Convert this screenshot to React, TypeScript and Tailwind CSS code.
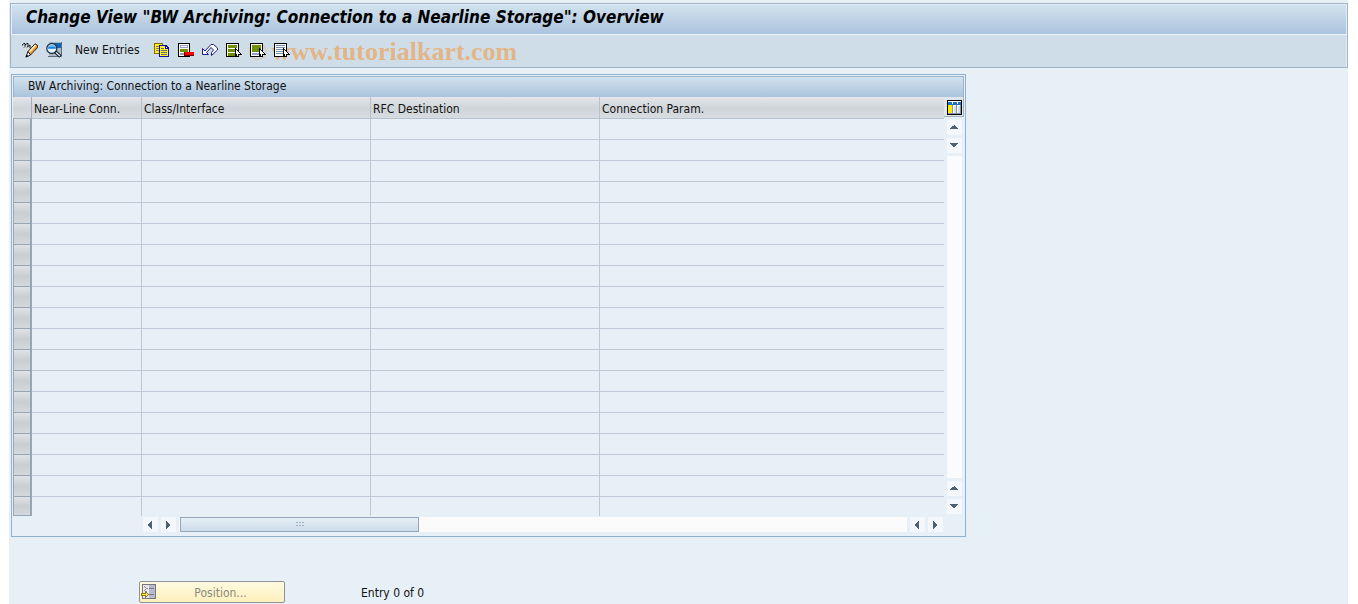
import type { ReactNode } from 'react'

const COLUMNS = [
  { label: 'Near-Line Conn.', width: 'w-[110px]' },
  { label: 'Class/Interface', width: 'w-[229px]' },
  { label: 'RFC Destination', width: 'w-[229px]' },
  { label: 'Connection Param.', width: '' },
]

const ROWS = Array.from({ length: 19 }, (_, i) => i)

function Icon({ children, size = 16 }: { children: ReactNode; size?: number }) {
  return (
    <svg width={size} height={size} viewBox={`0 0 ${size} ${size}`} shapeRendering="crispEdges" aria-hidden="true">
      {children}
    </svg>
  )
}

function ChangeIcon() {
  return (
    <svg width="16" height="16" viewBox="0 0 16 16" fill="none" aria-hidden="true">
      <path d="M.5 3.500V2.500L2 1.500h1v3L2 5.500M3 3l2-1.500h1V4l-1 1.500M6 4.500l2-1.500v3l1 1" stroke="#1a1a1a" />
      <path d="M6 9.500L13 1.800l2.600 1.700v2L8.500 13z" fill="#f7a93c" stroke="#1a1a1a" />
      <path d="M7.200 10L13.500 3" stroke="#fff3c8" strokeWidth="1.300" />
      <path d="M8.600 12L15 5" stroke="#d9761c" strokeWidth="1" />
      <path d="M6 9.500L8.500 13l-4.500 2z" fill="#fff" stroke="#1a1a1a" />
      <path d="M3.500 15.500l1-3 2 1.700z" fill="#000" />
    </svg>
  )
}

function DisplayIcon() {
  return (
    <svg width="16" height="16" viewBox="0 0 16 16" fill="none" aria-hidden="true">
      <path d="M3 0h12v14H3z" fill="#a9bac9" />
      <path d="M4 1h11v5H4z" fill="#1264b4" />
      <path d="M15.500 0v14.500H2" stroke="#5c6c7c" />
      <circle cx="5.800" cy="6.500" r="5" fill="#e4f5ff" stroke="#24384c" strokeWidth="1.300" />
      <path d="M2 4.500Q5.800 1.500 9.800 4.500V7H2z" fill="#5cb2f4" />
      <path d="M2.500 5h7v1.500h-7z" fill="#2484d8" />
      <path d="M9.500 10l5 4.500" stroke="#101820" strokeWidth="3.400" />
      <path d="M10 10.500l4 3.500" stroke="#e8f2fa" strokeWidth="1.300" />
    </svg>
  )
}

function CopyIcon() {
  return (
    <Icon>
      <path d="M0 1h9v11H0z" fill="#807000" />
      <path d="M1 2h7v9H1z" fill="#ffef20" />
      <path d="M2 4h5v1H2zM2 6h5v1H2zM2 8h5v1H2z" fill="#8a8130" />
      <path d="M5 3h7l3 3v9H5z" fill="#1010b0" />
      <path d="M6 4h5v3h3v7H6z" fill="#ffef20" />
      <path d="M12 5h1v1h-1z" fill="#fff" />
      <path d="M7 6h3v1H7zM7 8h6v1H7zM7 10h6v1H7zM7 12h6v1H7z" fill="#6c6c80" />
    </Icon>
  )
}

function DeleteIcon() {
  return (
    <Icon>
      <path d="M0 1h12v14H0z" fill="#000" />
      <path d="M1 2h10v12H1z" fill="#fff" />
      <path d="M2 3h8v3H2z" fill="#9a9ac8" />
      <path d="M3 4h6v1H3z" fill="#fff" />
      <path d="M2 7h8v3H2z" fill="#6f9000" />
      <path d="M2 11h6v2H2z" fill="#9a9ac8" />
      <path d="M6 10h10v4H6z" fill="#600" />
      <path d="M7 10h9v3H7z" fill="#f00" />
    </Icon>
  )
}

function UndoIcon() {
  return (
    <svg width="16" height="16" viewBox="0 0 16 16" aria-hidden="true">
      <path
        d="M.5 6.500V12.500H6.500L4.500 10.500L9 5.500L11.500 8L9.500 10.500V13.500L15.500 8V6L11.500 2.500H9L3 9z"
        fill="#fff"
        stroke="#1c1c88"
      />
    </svg>
  )
}

function SelectIcon({ kind }: { kind: 'all' | 'block' | 'none' }) {
  return (
    <Icon>
      <path d="M0 1h13v14H0z" fill="#000" />
      <path d="M1 2h11v12H1z" fill="#fff" />
      {kind === 'all' && <path d="M2 3h9v3H2zM2 7h9v3H2zM2 11h9v3H2z" fill="#6f9000" />}
      {kind === 'block' && (
        <>
          <path d="M2 3h9v7H2z" fill="#6f9000" />
          <path d="M2 11h9v2H2z" fill="#9a9ac8" />
        </>
      )}
      {kind === 'none' && <path d="M2 3h9v1H2zM2 5h9v1H2zM2 7h9v1H2zM2 9h9v1H2zM2 11h9v1H2z" fill="#7890a8" />}
      <path d="M9 6h1v1h1v1h1v1h1v1h1v1h1v1h1v1h-3v2h-2v-1h-1v1H9z" fill="#000" />
      <path d="M10 8h1v1h1v1h1v1h1v1h-2v2h-1v-2h-1z" fill="#fff" />
    </Icon>
  )
}

function LayoutIcon() {
  return (
    <Icon size={15}>
      <path d="M0 0h15v15H0z" fill="#000" />
      <path d="M1 1h13v13H1z" fill="#fff" />
      <path d="M1 2h13v3H1z" fill="#1c70c0" />
      <path d="M5 1h1v3H5zM10 1h1v3h-1z" fill="#fff" />
      <path d="M1 5h4v8H1z" fill="#ffe800" />
      <path d="M5 5h1v9H5zM9 5h1v9H9zM13 5h1v9h-1z" fill="#8898a8" />
      <path d="M7 6h2v7H7zM11 6h2v7h-2z" fill="#d5dce2" />
      <path d="M1 13h13v1H1z" fill="#8898a8" />
    </Icon>
  )
}

function PositionIcon() {
  return (
    <Icon>
      <path d="M1 0h14v15H1z" fill="#77777c" />
      <path d="M2 1h12v13H2z" fill="#e8e8e8" />
      <path d="M8 1h6v13H8z" fill="#b9b9d4" />
      <path d="M8 4h5v1H8zM8 10h5v1H8z" fill="#77777c" />
      <path d="M3 2h1v1H3zM4 3h1v1H4zM5 4h2v1H5zM4 5h1v1H4zM3 6h1v1H3zM4 7h2v1H4z" fill="#8a8a90" />
      <path d="M0 9h4V7h1v1h1v1h1v1h1v1H7v1H6v1H5v1H4v-2H0z" fill="#8a7a20" />
      <path d="M1 10h4V9h1v1h1v1H6v1H5v-1H1z" fill="#ffe850" />
    </Icon>
  )
}

const ARROWS = {
  up: 'M7 5h1v1h1v1h1v1h1v1H3V8h1V7h1V6h2z',
  down: 'M3 5h8v1h-1v1H9v1H8v1H6V8H5V7H4V6H3z',
  left: 'M5 7h1V6h1V5h1V4h1v8H8v-1H7v-1H6V9H5z',
  right: 'M5 4h1v1h1v1h1v1h1v2H8v1H7v1H6v1H5z',
}

function ScrollButton({ dir }: { dir: keyof typeof ARROWS }) {
  return (
    <button type="button" aria-label={`Scroll ${dir}`} className="size-[15px] shrink-0 bg-[#f4f7fb]">
      <Icon size={15}>
        <path d={ARROWS[dir]} fill="#4d6172" />
      </Icon>
    </button>
  )
}

function ToolButton({ label, children }: { label: string; children: ReactNode }) {
  return (
    <button type="button" aria-label={label} className="relative z-10 size-4 shrink-0">
      {children}
    </button>
  )
}

function TitlePanel() {
  return (
    <header className="border border-[#9fb4c6]">
      <h1 className="border border-x-[#e4edf5] border-t-[#e4edf5] border-b-[#eef4f9] bg-linear-to-b from-[#d2e2ee] to-[#abc3dd] px-[14px] pb-1 text-[17px] leading-[25px] font-bold text-black italic">
        Change View "BW Archiving: Connection to a Nearline Storage": Overview
      </h1>
      <div className="relative flex h-8 items-center gap-2 border-r border-[#e4edf5] bg-[#cfdde8] px-[11px] pb-[2px]">
        <ToolButton label="Display/Change"><ChangeIcon /></ToolButton>
        <ToolButton label="Details"><DisplayIcon /></ToolButton>
        <button type="button" className="pr-[6px] pl-[5px] whitespace-nowrap">New Entries</button>
        <ToolButton label="Copy As"><CopyIcon /></ToolButton>
        <ToolButton label="Delete"><DeleteIcon /></ToolButton>
        <ToolButton label="Undo Change"><UndoIcon /></ToolButton>
        <ToolButton label="Select All"><SelectIcon kind="all" /></ToolButton>
        <ToolButton label="Select Block"><SelectIcon kind="block" /></ToolButton>
        <ToolButton label="Deselect All"><SelectIcon kind="none" /></ToolButton>
        <span className="pointer-events-none absolute top-px left-[237px] flex gap-1 font-['Liberation_Serif',serif] text-[26px] leading-8 font-bold whitespace-nowrap text-[#eba45c]/70">
          <span className="font-normal opacity-60">©</span>
          <span>www.tutorialkart.com</span>
        </span>
      </div>
    </header>
  )
}

function EntryTable() {
  return (
    <table className="w-full table-fixed border-separate border-spacing-0">
      <thead>
        <tr className="h-[22px] bg-linear-to-b from-[#e3e6ea] via-[#d0d5da] to-[#d8dde2]">
          <th aria-label="Row selector" className="w-[19px] border-r border-b border-[#a3afba]" />
          {COLUMNS.map((col, i) => (
            <th
              key={col.label}
              className={`${col.width} border-b border-[#b5c1cf] p-0 pt-[3px] pl-[2px] text-left font-normal ${i < 3 ? 'border-r' : ''}`}
            >
              {col.label}
            </th>
          ))}
        </tr>
      </thead>
      <tbody>
        {ROWS.map((row) => (
          <tr key={row} className="group h-[21px] last:h-[19px]">
            <td className="border-r-2 border-b border-l border-[#98a5b2] bg-linear-to-b from-[#dfe3e7] via-[#c9ced3] to-[#d3d8dd] p-0" />
            {COLUMNS.map((col, i) => (
              <td
                key={col.label}
                className={`border-b border-[#bfcad8] p-0 group-last:border-b-0 ${i < 3 ? 'border-r' : ''}`}
              />
            ))}
          </tr>
        ))}
      </tbody>
    </table>
  )
}

function TablePanel() {
  return (
    <section className="w-full max-w-[955px] border border-[#8fb0cf] p-px">
      <h2 className="border-t border-r border-l border-[#9fb4c6] bg-linear-to-b from-[#d2e2ee] to-[#abc3dd] pb-[2px] pl-[14px] leading-[18px]">
        BW Archiving: Connection to a Nearline Storage
      </h2>
      <div className="flex">
        <div className="min-w-0 flex-1">
          <EntryTable />
        </div>
        <div className="flex w-5 flex-col items-center gap-[3px] pb-[2px]">
          <button
            type="button"
            aria-label="Table settings"
            className="flex h-5 w-5 shrink-0 items-end justify-center border-r border-b border-[#a3afba] bg-[#dfe6ec] pb-px pl-[2px]"
          >
            <LayoutIcon />
          </button>
          <ScrollButton dir="up" />
          <ScrollButton dir="down" />
          <div className="w-[15px] flex-1 bg-[#fafbfd]" />
          <ScrollButton dir="up" />
          <ScrollButton dir="down" />
        </div>
      </div>
      <div className="flex items-center gap-[3px] pt-px pr-[21px] pb-[3px] pl-[130px]">
        <ScrollButton dir="left" />
        <ScrollButton dir="right" />
        <div className="h-[15px] flex-1 bg-[#fbfbfb] pl-px">
          <div className="flex h-[15px] w-[239px] items-center justify-center border border-[#93a7ba] bg-linear-to-b from-[#e6eff6] to-[#cddcea]">
            <Icon size={8}>
              <path d="M0 1h2v1H0zM3 1h2v1H3zM6 1h2v1H6zM0 4h2v1H0zM3 4h2v1H3zM6 4h2v1H6z" fill="#9cb0c2" />
            </Icon>
          </div>
        </div>
        <ScrollButton dir="left" />
        <ScrollButton dir="right" />
      </div>
    </section>
  )
}

export default function App() {
  return (
    <div className="bg-white pr-[10px] pl-[9px] font-['DejaVu_Sans_Condensed','DejaVu_Sans',sans-serif] text-xs text-[#111]">
      <main className="min-h-screen bg-[#e8f0f7] pt-[3px] pl-px">
        <TitlePanel />
        <div className="pt-[6px] pl-px">
          <TablePanel />
        </div>
        <footer className="flex items-center gap-[76px] pt-11 pl-[129px]">
          <button
            type="button"
            className="flex h-[22px] w-[146px] items-center rounded-xs border border-[#8f9296] bg-linear-to-b from-[#fffbe0] to-[#fdf0bc] pl-px text-[#8a8a80]"
          >
            <PositionIcon />
            <span className="flex-1 pt-px text-center">Position...</span>
          </button>
          <p className="pt-px">Entry 0 of 0</p>
        </footer>
      </main>
    </div>
  )
}
